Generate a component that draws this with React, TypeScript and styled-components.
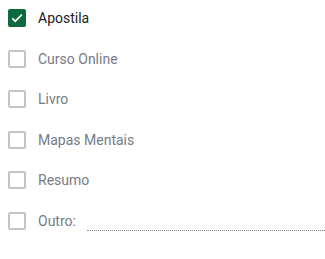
import React, { useState } from 'react'
import styled, { createGlobalStyle } from 'styled-components'

const GlobalStyle = createGlobalStyle`
    html, body {
        margin: 0;
        padding: 0;
        background: #ffffff;
    }
    body {
        font-family: Roboto, 'Liberation Sans', Arial, sans-serif;
    }
`

const List = styled.div`
    display: flex;
    flex-direction: column;
    gap: 4.6px;
    padding: 0 0 0 8px;
`

const Row = styled.label`
    display: flex;
    align-items: center;
    height: 36px;
    cursor: pointer;
`

const Box = styled.span<{ $checked: boolean }>`
    box-sizing: border-box;
    width: 18px;
    height: 18px;
    flex: none;
    border-radius: 2px;
    border: 2px solid ${(p) => (p.$checked ? '#0b6b3e' : '#c4c4c4')};
    background: ${(p) => (p.$checked ? '#0b6b3e' : '#ffffff')};
    display: flex;
    align-items: center;
    justify-content: center;
`

const Label = styled.span<{ $checked: boolean }>`
    margin-left: 12px;
    font-size: 14px;
    color: ${(p) => (p.$checked ? '#202124' : '#767b86')};
    white-space: nowrap;
`

const OtherLine = styled.span`
    flex: 1;
    margin-left: 11px;
    align-self: center;
    margin-top: 20px;
    border-bottom: 1px dotted #8a8a8a;
`

const options = ['Apostila', 'Curso Online', 'Livro', 'Mapas Mentais', 'Resumo']

const Check = () => (
    <svg width='16' height='16' viewBox='0 0 24 24'>
        <path d='M4 12.5l5 5L20.5 6' fill='none' stroke='#ffffff' strokeWidth='3' />
    </svg>
)

const App = () => {
    const [checked, setChecked] = useState<string[]>(['Apostila'])

    const toggle = (name: string) => {
        setChecked((prev) => (prev.includes(name) ? prev.filter((n) => n !== name) : [...prev, name]))
    }

    return (
        <>
            <GlobalStyle />
            <List>
                {options.map((o) => {
                    const on = checked.includes(o)
                    return (
                        <Row key={o} onClick={() => toggle(o)}>
                            <Box $checked={on}>{on && <Check />}</Box>
                            <Label $checked={on}>{o}</Label>
                        </Row>
                    )
                })}
                <Row onClick={() => toggle('Outro')}>
                    <Box $checked={checked.includes('Outro')}>{checked.includes('Outro') && <Check />}</Box>
                    <Label $checked={checked.includes('Outro')}>Outro:</Label>
                    <OtherLine />
                </Row>
            </List>
        </>
    )
}

export default App
